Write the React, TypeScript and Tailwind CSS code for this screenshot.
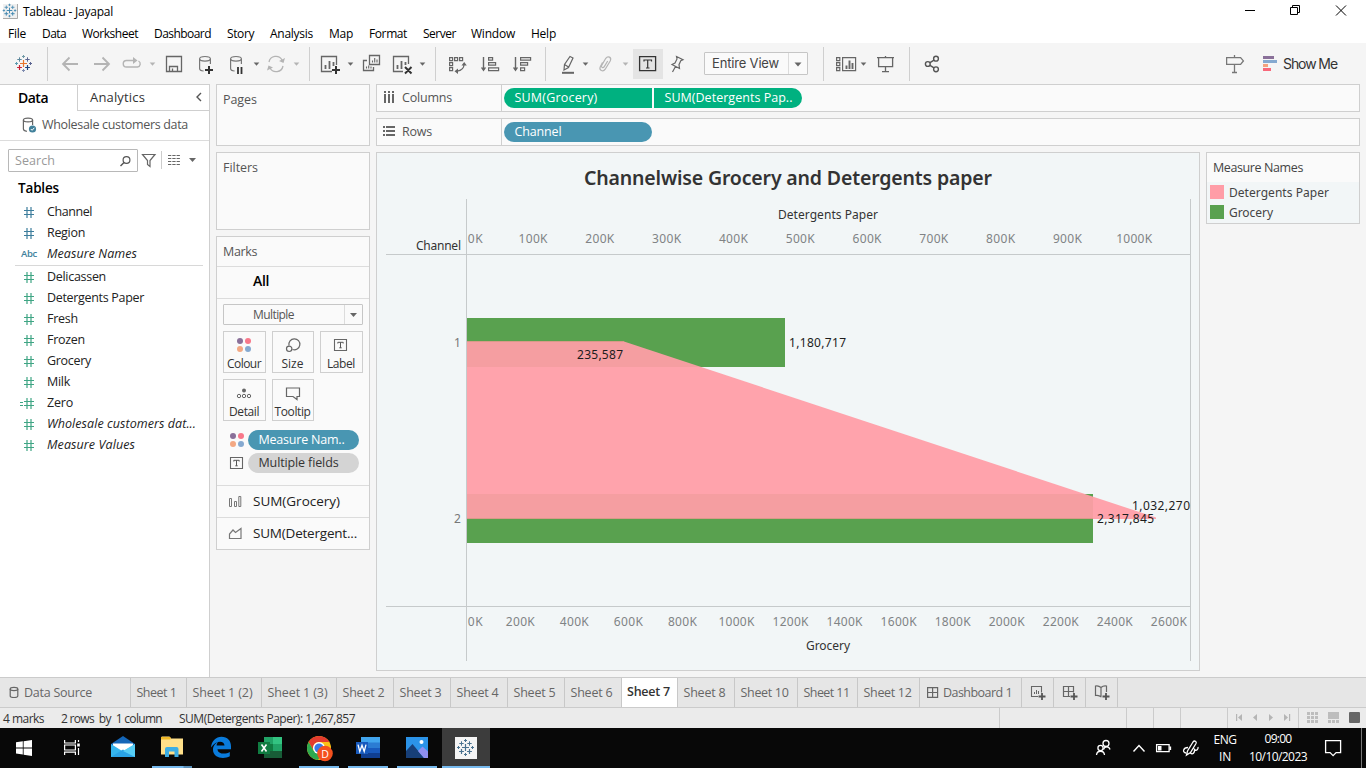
import React, { useLayoutEffect, useRef, useState } from "react";

/* Text whose letter spacing is fitted to a given advance width. */
function Fit({ w, children, className = "" }: { w: number; children: string; className?: string }) {
  const ref = useRef<HTMLSpanElement>(null);
  const [spacing, setSpacing] = useState(0);
  useLayoutEffect(() => {
    if (ref.current && spacing === 0) {
      const natural = ref.current.getBoundingClientRect().width;
      setSpacing((w - natural) / children.length);
    }
  }, []);
  return (
    <span ref={ref} className={`inline-block shrink-0 whitespace-pre ${className}`} style={{ letterSpacing: `${spacing}px` }}>
      {children}
    </span>
  );
}

/* Icon slot; the view box is "x y width height". */
function Ic({ v, className = "", children }: { v: string; className?: string; children?: React.ReactNode }) {
  const [, , w, h] = v.split(" ").map(Number);
  return (
    <svg viewBox={v} width={w} height={h} fill="none" className={`block shrink-0 ${className}`}>
      {children}
    </svg>
  );
}

const Sep = () => <div className="mt-1 h-[34px] w-px shrink-0 bg-[#cfcfcf]" />;

const Caret = ({ x, y = 64, c = "#666" }: { x: number; y?: number; c?: string }) => (
  <path d={`M${x - 2.8} ${y - 1.5}h5.6l-2.8 3.2z`} fill={c} />
);

const Cross = ({ x, y, r, c, w = 1.2 }: { x: number; y: number; r: number; c: string; w?: number }) => (
  <path d={`M${x - r} ${y}h${2 * r}M${x} ${y - r}v${2 * r}`} stroke={c} strokeWidth={w} />
);

function TableauMark({ x, y, mono, s = 1 }: { x: number; y: number; mono?: string; s?: number }) {
  const c = (k: string) => mono ?? k;
  return (
    <g transform={`translate(${x} ${y}) scale(${s})`}>
      <Cross x={0} y={0} r={3.5} c={c("#e8762c")} w={1.2} />
      <Cross x={-4} y={-4} r={2.2} c={c("#5b879b")} w={1} />
      <Cross x={4} y={-4} r={2.2} c={c("#5b6591")} w={1} />
      <Cross x={-4} y={4} r={2.4} c={c("#c72035")} w={1.2} />
      <Cross x={4} y={4} r={2.4} c={c("#1f457e")} w={1.2} />
      <Cross x={0} y={-7} r={1.5} c={c("#7199a6")} w={1} />
      <Cross x={0} y={7} r={1.5} c={c("#7f8cb0")} w={1} />
      <Cross x={-7} y={0} r={1.5} c={c("#5b9bb0")} w={1} />
      <Cross x={7} y={0} r={1.5} c={c("#5b6591")} w={1} />
    </g>
  );
}

const menus: [string, number, string][] = [
  ["File", 18, "w-[34px]"],
  ["Data", 24, "w-10"],
  ["Worksheet", 56, "w-[72px]"],
  ["Dashboard", 57, "w-[73px]"],
  ["Story", 27, "w-[43px]"],
  ["Analysis", 43, "w-[59px]"],
  ["Map", 24, "w-10"],
  ["Format", 38, "w-[54px]"],
  ["Server", 33, "w-12"],
  ["Window", 44, "w-[60px]"],
  ["Help", 25, "w-10"],
];

function Header() {
  return (
    <header className="h-[43px] bg-white font-['Open_Sans',sans-serif] text-xs text-black">
      <div className="flex h-6 items-center">
        <Ic v="0 0 23 24">
          <path d="M3 4h15v15H3z" fill="#f0f0f0" />
          <path d="M17.5 4v14.500H3" stroke="#aaa" />
          <TableauMark x={9.5} y={10.500} mono="#3f86b0" s={0.8} />
        </Ic>
        <Fit w={90}>Tableau - Jayapal</Fit>
        <Ic v="1240 0 110 24" className="ml-auto mr-4">
          <path d="M1245 10.5h10M1290.500 7.500h7v7h-7zM1292.500 7V5.500h7v7H1298M1336 5.500l10 10M1346 5.500l-10 10" stroke="#000" />
        </Ic>
      </div>
      <div className="flex h-5 items-center pl-2">
        {menus.map(([t, w, slot]) => (
          <div key={t} className={`${slot} shrink-0`}>
            <Fit w={w}>{t}</Fit>
          </div>
        ))}
      </div>
    </header>
  );
}

function Toolbar() {
  return (
    <div className="flex h-[41px] bg-[#f5f5f5] font-['Inter',sans-serif] text-[#333]">
      <Ic v="0 43 47 40">
        <TableauMark x={23.500} y={63.500} s={1} />
      </Ic>
      <Sep />
      <Ic v="48 43 261 40">
        <g stroke="#b4b4b4" strokeWidth="1.800">
          <path d="M78 64H63M69.500 57.500L63 64l6.500 6.500M94 64h15M102.500 57.500L109 64l-6.500 6.500" />
          <path d="M134 60.500h-7.500a3.200 3.200 0 0 0 0 6.500h11a3.200 3.200 0 0 0 1-6" strokeWidth="1.400" />
          <path d="M133 57l4.500 3.500-4.500 3.500z" fill="#b4b4b4" stroke="none" />
        </g>
        <Caret x={152.500} c="#b4b4b4" />
        <path d="M166.500 56.500h15v15h-15zM169.500 71.500v-5h8v5M172.500 68.500v3" stroke="#666" strokeWidth="1.300" />
        <g stroke="#777" strokeWidth="1.200">
          <ellipse cx="205" cy="58.800" rx="5.400" ry="2.300" />
          <path d="M199.600 59v9.500c0 1.500 1.500 2.300 4 2.500M210.400 59v5" />
          <ellipse cx="236" cy="58.800" rx="5.400" ry="2.300" />
          <path d="M230.600 59v9.500c0 1.500 1.500 2.300 4 2.500M241.400 59v5" />
        </g>
        <path d="M205 70h8M209 66v8" stroke="#333" strokeWidth="2" />
        <path d="M238 67v7M241.500 67v7" stroke="#333" strokeWidth="1.800" />
        <Caret x={256.500} />
        <g stroke="#b4b4b4" strokeWidth="1.300">
          <path d="M269 62a7 7 0 0 1 13-2M283 66a7 7 0 0 1-13 2" />
          <path d="M285 58l-1.500 5-4.500-2zM267 70.500l1.500-5 4.500 2z" fill="#b4b4b4" stroke="none" />
        </g>
        <Caret x={296.500} c="#b4b4b4" />
      </Ic>
      <Sep />
      <Ic v="310 43 125 40">
        <g stroke="#666" strokeWidth="1.300">
          <path d="M332 71.500h-10.500v-15h15V65" />
          <path d="M325.500 69v-4M329.500 69v-8M333.500 66v-4" strokeWidth="1.800" />
          <path d="M369.500 55.500h10v9h-10zM367 60.500h-3.500v10h10V67" />
          <path d="M372.500 62.500v-2M374.700 62.500v-4.500M377 62.500v-3M366.500 68.500v-2M368.700 68.500v-3M371 68.500v-2" strokeWidth="1.100" />
          <path d="M403 71.500h-9.500v-15h15V64" />
          <path d="M397.500 69v-4M401.500 69v-8M405.500 65v-3" strokeWidth="1.800" />
        </g>
        <path d="M332 70h8M336 66v8M405 67l6.500 6.500M411.500 67l-6.500 6.500" stroke="#333" strokeWidth="2" />
        <Caret x={350.500} />
        <Caret x={422.500} />
      </Ic>
      <Sep />
      <Ic v="436 43 109 40">
        <g stroke="#666" strokeWidth="1.200">
          <path d="M449.600 57.600h3v3h-3zM454.600 57.600h3v3h-3zM459.600 57.600h3v3h-3zM449.600 62.600h3v3h-3zM449.600 67.600h3v3h-3z" />
          <path d="M464 64.500c0 4-2.500 6-7 6.700" />
          <path d="M461.500 65.500l2.700-3.500 2.600 3.500zM458 68.500l-3.500 2.800 3.500 2.700z" fill="#666" stroke="none" />
          <path d="M483.500 57v12M515.500 57v12" strokeWidth="1.400" />
          <path d="M480.800 67.500h5.400l-2.700 4zM512.800 67.500h5.400l-2.700 4z" fill="#666" stroke="none" />
          <path d="M488.600 57.600h4v2.500h-4zM488.600 62.700h7v2.500h-7zM488.600 67.900h10v2.700h-10z" />
          <path d="M520.600 57.600h10v2.500h-10zM520.600 62.700h7v2.500h-7zM520.600 67.900h4v2.700h-4z" />
        </g>
      </Ic>
      <Sep />
      <Ic v="546 43 87 40">
        <path d="M570 56.500l3 1.500-4.500 9.500-4.500 2.500.5-5.500zM564.500 64.500l4 2.500" stroke="#666" strokeWidth="1.200" />
        <path d="M562 72.800h12" stroke="#666" strokeWidth="2" />
        <Caret x={585.500} />
        <path
          d="M602.500 62.500l-2.200 4.300c-1.600 3.600 2.800 5.600 4.900 2.400l5-8.200c1.800-3.700-2.300-5.700-4.400-2.700l-4 6.800c-1.200 2.500 1.300 3.500 2.500 1.500l3.400-5.600"
          stroke="#b4b4b4"
          strokeWidth="1.200"
        />
        <Caret x={625.500} c="#b4b4b4" />
      </Ic>
      <div className="mt-1.5 h-[30px] w-[30px] shrink-0 bg-[#e4e4e4]">
        <Ic v="633 49 30 30">
          <path d="M639.600 56.600h16v14h-16z" stroke="#333" strokeWidth="1.300" />
          <path d="M644 61.500v-1.500h7.500v1.500M647.700 60v8M646 68h3.500" stroke="#333" strokeWidth="1.200" />
        </Ic>
      </div>
      <Ic v="663 43 41 40">
        <path d="M676.500 56.500l6.500 3.200-2.200 1-1.800 4 .5 3.800-7.500-4 3-1.500 2-4zM675.500 66.500l-3 5.500" stroke="#666" strokeWidth="1.200" />
      </Ic>
      <div className="mt-[9px] flex h-[23px] w-[104px] shrink-0 items-center rounded-[1px] border border-[#c6c6c6] bg-[#fafafa] pl-[7px] text-[13px] text-[#444]">
        <Fit w={67}>Entire View</Fit>
        <div className="ml-auto h-full border-l border-[#dcdcdc]">
          <Ic v="789 53 18 21">
            <path d="M794.500 62.500h7l-3.500 4z" fill="#666" />
          </Ic>
        </div>
      </div>
      <div className="w-[15px] shrink-0" />
      <Sep />
      <Ic v="824 43 85 40">
        <g stroke="#666" strokeWidth="1.200">
          <path d="M836.600 57.600h3.200v3h-3.200zM836.600 62.600h3.200v3h-3.200zM836.600 67.600h3.200v3h-3.200zM842.600 57.600h13v13h-13z" />
          <path d="M846.500 69v-3.500M849.500 69v-8.500M852.500 69v-6" strokeWidth="1.900" />
          <path d="M877 57.600h17M878.600 58v8.600h14V58M885.500 67v4.500M882 71.600h7M885.500 56v1.500" strokeWidth="1.300" />
        </g>
        <Caret x={863.500} />
      </Ic>
      <Sep />
      <Ic v="910 43 316 40">
        <g stroke="#555" strokeWidth="1.400">
          <circle cx="927.800" cy="64" r="2.400" />
          <circle cx="936" cy="58.700" r="2.400" />
          <circle cx="936" cy="69.300" r="2.400" />
          <path d="M930 62.700l4-2.600M930 65.300l4 2.600" />
        </g>
      </Ic>
      <Ic v="1226 43 57 40">
        <path d="M1226.600 57.600h14l2.800 3.300-2.800 3.500h-14zM1234.500 55v2.500M1234.500 64.500v8M1232 72.500h5" stroke="#777" strokeWidth="1.300" />
        <path d="M1263 56h11v3h-11z" fill="#8a7099" />
        <path d="M1263 60h14v3h-14z" fill="#85a9d0" />
        <path d="M1263 64h5v3h-5z" fill="#f3a27e" />
        <path d="M1263 68h8v3h-8z" fill="#f8687a" />
      </Ic>
      <div className="flex items-center text-sm">
        <Fit w={54}>Show Me</Fit>
      </div>
    </div>
  );
}

function Hash({ c, calc }: { c: string; calc?: boolean }) {
  return (
    <Ic v="0 0 29 20">
      <path d="M7 4v11M11 4v11M4 7.500h10M4 11.500h10" stroke={c} strokeWidth="1.200" />
      {calc && <path d="M0 8.500h3M0 11.500h3" stroke={c} strokeWidth="1" />}
    </Ic>
  );
}

type Field = { t: string; w: number; italic?: boolean; kind?: "abc" | "calc" };

function FieldRow({ f, c }: { f: Field; c: string }) {
  return (
    <div className="flex h-[21px] items-center pl-5">
      {f.kind === "abc" ? (
        <div className="w-[29px] shrink-0 pl-px text-[9.5px] font-semibold text-[#41819b]">
          <Fit w={16}>Abc</Fit>
        </div>
      ) : (
        <Hash c={c} calc={f.kind === "calc"} />
      )}
      <Fit w={f.w} className={f.italic ? "-ml-[2px] italic" : "-ml-[2px]"}>
        {f.t}
      </Fit>
    </div>
  );
}

const dims: Field[] = [
  { t: "Channel", w: 45 },
  { t: "Region", w: 38 },
  { t: "Measure Names", w: 90, italic: true, kind: "abc" },
];
const measures: Field[] = [
  { t: "Delicassen", w: 59 },
  { t: "Detergents Paper", w: 97 },
  { t: "Fresh", w: 31 },
  { t: "Frozen", w: 38 },
  { t: "Grocery", w: 44 },
  { t: "Milk", w: 23 },
  { t: "Zero", w: 26, kind: "calc" },
  { t: "Wholesale customers dat...", w: 149, italic: true },
  { t: "Measure Values", w: 88, italic: true },
];

function DataPane() {
  return (
    <aside className="flex w-[210px] shrink-0 flex-col border-r border-t border-[#cfcfcf] bg-white text-[#222]">
      <div className="flex h-[26px]">
        <div className="flex w-[77px] shrink-0 items-center pl-[18px] text-sm font-semibold text-black">
          <Fit w={30}>Data</Fit>
        </div>
        <div className="flex grow items-center border-b border-l border-[#cfcfcf] pl-3 text-[13px] text-[#333]">
          <Fit w={55}>Analytics</Fit>
          <Ic v="145 85 64 25">
            <path d="M201 93l-4 4 4 4" stroke="#555" strokeWidth="1.400" />
          </Ic>
        </div>
      </div>
      <div className="flex h-[30px] items-center border-b border-[#dcdcdc] text-[#555]">
        <Ic v="0 111 42 29">
          <g stroke="#666" strokeWidth="1.200">
            <ellipse cx="28" cy="120" rx="4.600" ry="1.900" />
            <path d="M23.400 120v9c0 1.200 1 2 3.500 2.300M32.600 120v5" />
          </g>
          <circle cx="32.500" cy="129" r="3.600" fill="#41819b" />
          <path d="M30.800 129l1.300 1.300 2.200-2.500" stroke="#fff" strokeWidth="1" />
        </Ic>
        <Fit w={146}>Wholesale customers data</Fit>
      </div>
      <div className="mt-2 flex h-[23px] pl-2">
        <div className="flex w-[130px] shrink-0 items-center rounded-[1px] border border-[#b8b8b8] pl-1.5 pt-px text-[#999]">
          <Fit w={40}>Search</Fit>
          <Ic v="115 150 22 21" className="ml-auto">
            <circle cx="126.500" cy="159" r="3.400" stroke="#555" strokeWidth="1.200" />
            <path d="M124 161.500l-3.500 3.500" stroke="#555" strokeWidth="1.400" />
          </Ic>
        </div>
        <Ic v="138 149 71 23">
          <path d="M142.500 154.500h12.500l-5 6v6l-2.500-2v-4z" stroke="#666" strokeWidth="1.200" />
          <path d="M161.500 151v18" stroke="#ccc" />
          <path d="M168 155.500h12M168 158.500h12M168 161.500h12M168 164.500h12" stroke="#666" strokeWidth="1.200" strokeDasharray="3.300 1" />
          <path d="M189 158h7l-3.500 4z" fill="#666" />
        </Ic>
      </div>
      <div className="mt-[5px] flex h-[22px] items-center pl-[18px] text-[13.5px] font-semibold text-black">
        <Fit w={41}>Tables</Fit>
      </div>
      <div className="mt-[3px]">
        {dims.map((f) => (
          <FieldRow key={f.t} f={f} c="#3d7d9c" />
        ))}
      </div>
      <div className="ml-[15px] mr-1.5 h-px shrink-0 bg-[#d8d8d8]" />
      <div className="mt-px">
        {measures.map((f) => (
          <FieldRow key={f.t} f={f} c="#3fa584" />
        ))}
      </div>
    </aside>
  );
}

function MarkDots({ v }: { v: string }) {
  return (
    <Ic v={v}>
      <circle cx="4" cy="4" r="3" fill="#8a7099" />
      <circle cx="12" cy="4" r="3" fill="#f8788a" />
      <circle cx="4" cy="12" r="3" fill="#f3a883" />
      <circle cx="12" cy="12" r="3" fill="#85a9d0" />
    </Ic>
  );
}

function LabelIcon() {
  return (
    <Ic v="0 0 16 16">
      <path d="M1.500 2.500h12v11h-12z" stroke="#666" strokeWidth="1.100" />
      <path d="M4.800 6.500V5.300h5.400v1.200M7.500 5.300v5.500M6.300 10.800h2.400" stroke="#555" />
    </Ic>
  );
}

function MarkButton({ label, w, children }: { label: string; w: number; children: React.ReactNode }) {
  return (
    <div className="flex h-[42px] flex-col items-center border border-[#cfcfcf] pr-px pt-[5px] text-xs text-[#333]">
      {children}
      <div className="mt-[3px] leading-4">
        <Fit w={w}>{label}</Fit>
      </div>
    </div>
  );
}

const card = "border border-[#cfcfcf] bg-[#fafafa]";

function CardsColumn() {
  return (
    <div className="flex w-[154px] shrink-0 flex-col gap-1.5 text-[#555]">
      <section className={`${card} h-[62px] pl-1.5 pt-[5px] leading-5`}>
        <Fit w={34}>Pages</Fit>
      </section>
      <section className={`${card} h-[78px] pl-1.5 pt-[5px] leading-5`}>
        <Fit w={35}>Filters</Fit>
      </section>
      <section className={`${card} h-[314px]`}>
        <div className="h-[30px] border-b border-[#dcdcdc] pl-1.5 pt-[5px] leading-5">
          <Fit w={34}>Marks</Fit>
        </div>
        <div className="flex h-8 items-center border-b border-[#dcdcdc] pb-[3px] pl-9 text-sm font-semibold text-black">
          <Fit w={16}>All</Fit>
        </div>
        <div className="h-[187px] border-b border-[#dcdcdc] px-1.5 pt-[5px]">
          <div className="flex h-[21px] items-center rounded-[1px] border border-[#c6c6c6] pl-[29px] text-xs">
            <Fit w={41}>Multiple</Fit>
            <div className="ml-auto h-full border-l border-[#dcdcdc]">
              <Ic v="0 0 17 19">
                <path d="M5 8h7L8.500 12z" fill="#666" />
              </Ic>
            </div>
          </div>
          <div className="mt-1.5 grid grid-cols-[43px_42px_43px] gap-1.5">
            <MarkButton label="Colour" w={34}>
              <MarkDots v="0 0 16 16" />
            </MarkButton>
            <MarkButton label="Size" w={22}>
              <Ic v="0 0 16 16">
                <path d="M4 8.500a5.500 5.500 0 1 1 3.500 4" stroke="#666" strokeWidth="1.200" />
                <circle cx="4.200" cy="11.800" r="2.700" stroke="#666" strokeWidth="1.200" />
              </Ic>
            </MarkButton>
            <MarkButton label="Label" w={28}>
              <LabelIcon />
            </MarkButton>
            <MarkButton label="Detail" w={30}>
              <Ic v="0 0 16 16">
                <circle cx="8" cy="5.500" r="2" fill="#666" />
                <circle cx="3" cy="11" r="1.700" stroke="#666" />
                <circle cx="8" cy="11" r="1.700" stroke="#666" />
                <circle cx="13" cy="11" r="1.700" stroke="#666" />
              </Ic>
            </MarkButton>
            <MarkButton label="Tooltip" w={36}>
              <Ic v="0 0 16 16">
                <path d="M1.500 3h13v8.500H12v3l-4-3H1.500z" stroke="#666" strokeWidth="1.200" />
              </Ic>
            </MarkButton>
          </div>
          <div className="mt-[9px] flex h-5 items-center pl-1.5">
            <MarkDots v="0 0 19 16" />
            <div className="flex h-5 w-[111px] items-center rounded-full bg-[#4996b2] pl-[10.500px] font-medium text-white">
              <Fit w={86}>Measure Nam..</Fit>
            </div>
          </div>
          <div className="mt-[3px] flex h-5 items-center pl-1.5">
            <LabelIcon />
            <div className="ml-[3px] flex h-5 w-[111px] items-center rounded-full bg-[#d4d4d4] pl-[10.500px] font-medium text-[#333]">
              <Fit w={80}>Multiple fields</Fit>
            </div>
          </div>
        </div>
        <div className="flex h-8 items-center border-b border-[#dcdcdc] pb-px text-[13.5px] text-[#222]">
          <Ic v="217 485 36 31">
            <path d="M229.500 497.500h2v8h-2zM234.500 500.500h2v5h-2zM238.800 495.500h2v10h-2z" stroke="#777" />
          </Ic>
          <Fit w={87}>SUM(Grocery)</Fit>
        </div>
        <div className="flex h-[31px] items-center pb-px text-[13.5px] text-[#222]">
          <Ic v="217 517 36 31">
            <path d="M229.500 537.500v-4.500l3.500-4 2.500 2.500 5.500-4v10z" stroke="#777" strokeWidth="1.200" />
          </Ic>
          <Fit w={104}>SUM(Detergent...</Fit>
        </div>
      </section>
    </div>
  );
}

function Shelf({ label, w, icon, children }: { label: string; w: number; icon: React.ReactNode; children: React.ReactNode }) {
  return (
    <div className={`${card} flex h-7 text-[#555]`}>
      <div className="flex w-[125px] shrink-0 items-center border-r border-[#cfcfcf]">
        {icon}
        <Fit w={w}>{label}</Fit>
      </div>
      <div className="flex items-center gap-0.5 pl-0.5 font-medium text-white">{children}</div>
    </div>
  );
}

const DetTicks = ["0K", "100K", "200K", "300K", "400K", "500K", "600K", "700K", "800K", "900K", "1000K"];
const GroTicks = ["0K", "200K", "400K", "600K", "800K", "1000K", "1200K", "1400K", "1600K", "1800K", "2000K", "2200K", "2400K", "2600K"];
const tickWidth = (t: string) => (t.length === 2 ? 15 : t.length === 4 ? 29 : 36);

function Ticks({ ticks, step, y }: { ticks: string[]; step: number; y: number }) {
  return (
    <g fill="#808385">
      {ticks.map((t, i) => (
        <text key={t} x={(i === 0 ? 475.2 : 466.2 + i * step) - tickWidth(t) / 2} y={y} textLength={tickWidth(t)}>
          {t}
        </text>
      ))}
    </g>
  );
}

function Chart() {
  return (
    <Ic v="377 153 822 517" className="font-['Noto_Sans',sans-serif] text-xs">
      <path d="M467 318h318v49H467zM467 494h626v49H467z" fill="#59a14f" />
      <path d="M467 341.500h157l532 176v1.500H467z" fill="#ff9da7" fillOpacity="0.940" />
      <path d="M467 341.500h157M467 518.500h626" stroke="#d89a88" strokeWidth="1" />
      <path d="M466.500 199v462M1190.500 199v462M386 254.500h805M386 606.500h805" stroke="#c6cacb" />
      <text x="584" y="185" textLength="408" fill="#333" className="text-[19.5px] font-semibold">
        Channelwise Grocery and Detergents paper
      </text>
      <g fill="#333">
        <text x="778" y="219" textLength="100">Detergents Paper</text>
        <text x="806" y="650" textLength="44">Grocery</text>
        <text x="416" y="250" textLength="45">Channel</text>
      </g>
      <Ticks ticks={DetTicks} step={66.800} y={243} />
      <Ticks ticks={GroTicks} step={54.050} y={626} />
      <g fill="#777">
        <text x="454" y="347">1</text>
        <text x="454" y="523">2</text>
      </g>
      <g fill="#1d1d1d">
        <text x="789" y="347" textLength="57">1,180,717</text>
        <text x="577" y="359" textLength="46">235,587</text>
        <text x="1132" y="510" textLength="58">1,032,270</text>
        <text x="1097" y="523" textLength="57">2,317,845</text>
      </g>
    </Ic>
  );
}

function Workspace() {
  return (
    <div className="flex min-w-0 grow flex-col gap-1.5">
      <Shelf
        label="Columns"
        w={50}
        icon={
          <Ic v="377 85 25 26">
            <path d="M385 91v2M389 91v2M393 91v2M385 94v9M389 94v9M393 94v9" stroke="#666" strokeWidth="2" />
          </Ic>
        }
      >
        <div className="flex h-5 w-[148px] items-center rounded-l-full bg-[#00b180] pl-[10.500px]">
          <Fit w={83}>SUM(Grocery)</Fit>
        </div>
        <div className="flex h-5 w-[148px] items-center rounded-r-full bg-[#00b180] pl-[10.500px]">
          <Fit w={128}>SUM(Detergents Pap..</Fit>
        </div>
      </Shelf>
      <Shelf
        label="Rows"
        w={30}
        icon={
          <Ic v="377 119 25 26">
            <path d="M383 127h2M383 131h2M383 135h2M386 127h9M386 131h9M386 135h9" stroke="#666" strokeWidth="2" />
          </Ic>
        }
      >
        <div className="flex h-5 w-[148px] items-center rounded-full bg-[#4996b2] pl-[10.500px]">
          <Fit w={47}>Channel</Fit>
        </div>
      </Shelf>
      <div className="flex gap-1.5">
        <div className="h-[519px] w-[824px] shrink-0 border border-[#cfcfcf] bg-[#f2f6f7]">
          <Chart />
        </div>
        <div className="h-[72px] grow border border-[#cfcfcf] bg-[#f2f6f7] text-[#444]">
          <div className="h-[29px] bg-[#fafafa] pl-1.5 pt-[5px] leading-5">
            <Fit w={90}>Measure Names</Fit>
          </div>
          <div className="flex h-5 items-center gap-[5px] pl-[3px] pt-0.5 font-['Noto_Sans',sans-serif] text-xs">
            <div className="mb-0.5 size-3.5 bg-[#ff9da7]" />
            <Fit w={100}>Detergents Paper</Fit>
          </div>
          <div className="flex h-5 items-center gap-[5px] pl-[3px] pt-0.5 font-['Noto_Sans',sans-serif] text-xs">
            <div className="mb-0.5 size-3.5 bg-[#59a14f]" />
            <Fit w={44}>Grocery</Fit>
          </div>
        </div>
      </div>
    </div>
  );
}

const sheets: [string, number, string][] = [
  ["Sheet 1", 40, "w-14"],
  ["Sheet 1 (2)", 60, "w-[75px]"],
  ["Sheet 1 (3)", 60, "w-[75px]"],
  ["Sheet 2", 42, "w-[57px]"],
  ["Sheet 3", 42, "w-[57px]"],
  ["Sheet 4", 42, "w-[57px]"],
  ["Sheet 5", 42, "w-[57px]"],
  ["Sheet 6", 42, "w-[57px]"],
  ["Sheet 7", 43, "w-14"],
  ["Sheet 8", 42, "w-[57px]"],
  ["Sheet 10", 48, "w-[63px]"],
  ["Sheet 11", 46, "w-[60px]"],
  ["Sheet 12", 48, "w-[62px]"],
];

function SheetTabs() {
  const tab = "flex h-full shrink-0 items-center border-r border-[#c8c8c8]";
  return (
    <div className="flex h-[31px] border-y border-[#cbcbcb] bg-[#e6e6e6] text-[#666]">
      <div className={`${tab} w-[131px] pt-0.5`}>
        <Ic v="0 679 24 27">
          <ellipse cx="14" cy="688" rx="3.800" ry="1.600" stroke="#666" strokeWidth="1.200" />
          <path d="M10.200 688v7c0 2 7.600 2 7.600 0v-7" stroke="#666" strokeWidth="1.200" />
        </Ic>
        <Fit w={68}>Data Source</Fit>
      </div>
      {sheets.map(([t, w, slot]) => (
        <div
          key={t}
          className={`${tab} ${slot} ${t === "Sheet 7" ? "bg-white pl-[5px] font-semibold text-[#333]" : "pl-[5.500px] pt-0.5"}`}
        >
          <Fit w={w}>{t}</Fit>
        </div>
      ))}
      <div className={`${tab} w-[102px] pt-0.5`}>
        <Ic v="920 679 23 27">
          <path d="M927.600 686.600h10v9.800h-10zM932.600 686.500v10M927.500 691.500h10" stroke="#666" strokeWidth="1.200" />
        </Ic>
        <Fit w={69}>Dashboard 1</Fit>
      </div>
      <div className={`${tab} w-8`}>
        <Ic v="1022 678 31 29">
          <path d="M1038 696.500h-6.500v-10h10v6" stroke="#666" strokeWidth="1.100" />
          <path d="M1034.500 694v-2M1036.500 694v-4M1038.500 694v-3" stroke="#666" />
          <path d="M1038.500 696.500h7M1042 693v7" stroke="#555" strokeWidth="1.800" />
        </Ic>
      </div>
      <div className={`${tab} w-8`}>
        <Ic v="1054 678 31 29">
          <path d="M1070 696.500h-6.500v-10h10v6M1068.500 686.500v10M1063.500 691.500h10" stroke="#666" strokeWidth="1.200" />
          <path d="M1070.500 696.500h7M1074 693v7" stroke="#555" strokeWidth="1.800" />
        </Ic>
      </div>
      <div className={`${tab} w-8`}>
        <Ic v="1086 678 31 29">
          <path d="M1101.500 697c-2-1.500-4-2-6-1.500v-9.500c2-.5 4 .2 5.500 1.500 1.500-1.300 3-2 5.500-1.500v6M1101 687.500v8.500" stroke="#666" strokeWidth="1.200" />
          <path d="M1102.500 696.500h7M1106 693v7" stroke="#555" strokeWidth="1.800" />
        </Ic>
      </div>
    </div>
  );
}

function StatusBar() {
  return (
    <div className="flex h-5 items-center bg-[#ebebeb] pl-[3px] text-xs text-[#333]">
      <div className="w-[58px] shrink-0 pt-px"><Fit w={41}>4 marks</Fit></div>
      <div className="w-[118px] shrink-0 pt-px"><Fit w={101}>2 rows  by  1 column</Fit></div>
      <Fit w={176} className="pt-px">SUM(Detergents Paper): 1,267,857</Fit>
      <div className="ml-auto flex h-full">
        <div className="w-[127px] border-l border-[#cbcbcb]" />
        <div className="w-[27px] border-l border-[#cbcbcb]" />
        <div className="w-[27px] border-l border-[#cbcbcb]" />
        <div className="w-[47px] border-l border-[#cbcbcb]" />
        <div className="border-l border-[#cbcbcb]">
          <Ic v="1228 708 70 20">
            <path d="M1236 714h1.200v7H1236zM1242 714v7l-4-3.500zM1257 714v7l-4-3.500zM1269 714v7l4-3.500zM1284 714v7l4-3.500zM1289 714h1.200v7H1289z" fill="#b5b5b5" />
          </Ic>
        </div>
        <div className="border-l border-[#cbcbcb]">
          <Ic v="1299 708 67 20">
            <path d="M1307 712h3v3h-3zM1311 712h3v3h-3zM1315 712h3v3h-3zM1307 716h3v3h-3zM1311 716h3v3h-3zM1315 716h3v3h-3zM1307 720h3v3h-3zM1311 720h3v3h-3zM1315 720h3v3h-3zM1328 712h11v7h-11zM1328 720h3v3h-3zM1332 720h3v3h-3zM1336 720h3v3h-3z" fill="#bdbdbd" />
            <rect x="1349" y="712" width="11" height="11" rx="1" fill="#666" />
          </Ic>
        </div>
      </div>
    </div>
  );
}

function Taskbar() {
  return (
    <div className="flex h-10 bg-[#080808] font-['Open_Sans',sans-serif] text-xs text-white">
      <Ic v="0 728 96 40">
        <path d="M16 742.300l6.800-1v6.200H16zM23.600 741.200l8.400-1.200v7.500h-8.400zM16 748.400h6.800v6.200l-6.800-1zM23.600 748.400h8.400v7.600l-8.400-1.200z" fill="#fff" />
        <path d="M64.600 740v3h10.800v-3M64.600 755v-2.800h10.800v2.800M64.600 745h10.800v5H64.600zM78.500 740v2M78.500 748v7" stroke="#fff" strokeWidth="1.200" />
        <path d="M77.200 743.500h2.600v3h-2.600z" fill="#fff" />
      </Ic>
      <Ic v="96 728 56 40">
        <path d="M111 744l12-8 12 8v3h-24z" fill="#1466b8" />
        <path d="M113 743.500h20v8h-20z" fill="#fff" />
        <path d="M111 744l12 7.500L135 744v13h-24z" fill="#35b5ee" />
        <path d="M111 757l12-7.500 12 7.500z" fill="#2aa3e6" />
        <path d="M135 744v13l-12-6z" fill="#56cdf5" />
      </Ic>
      <Ic v="152 728 48 40">
        <path d="M161 738c0-1 .5-1.500 1.500-1.500h7l1.500 2h12v16h-22z" fill="#ffe08a" />
        <path d="M161 737h9.500v2.500H161z" fill="#f0b928" />
        <path d="M165 757v-8q0-2 2-2h9.500q2 0 2 2v8h-4v-5.500h-5.500v5.500z" fill="#3caee5" />
        <path d="M152 766h40v2h-40z" fill="#76b9ed" />
        <path d="M183.500 766h8.500v2h-8.500z" fill="#5a8fb8" />
      </Ic>
      <Ic v="200 728 48 40">
        <path d="M211 747.500c.5-6.500 5-10.800 10.500-10.800 6 0 9.500 4 9.500 9.500v3h-13.500c.2 5 8 5.500 12.300 2.800v4.300c-6.500 3.500-16.800 1.500-16.800-6.500 0-4 2.300-6.500 5-7.800-1 1.300-1.300 2.300-1.400 3.500h7.900c0-5-8.500-5.500-13.500 2z" fill="#0a7bdb" />
      </Ic>
      <Ic v="248 728 51 40">
        <path d="M264 737h18v21h-18z" fill="#21a366" />
        <path d="M273 737h9v7h-9z" fill="#33c481" />
        <path d="M264 744h9v7h-9z" fill="#107c41" />
        <path d="M264 751h18v7h-18z" fill="#185c37" />
        <path d="M258 742h12v12h-12z" fill="#107c41" />
        <path d="M261.500 744.500l5 7M266.500 744.500l-5 7" stroke="#fff" strokeWidth="1.600" />
      </Ic>
      <Ic v="299 728 48 40">
        <circle cx="319" cy="748" r="12" fill="#fbc116" />
        <path d="M308.600 742a12 12 0 0 1 20.800 0H319a6 6 0 0 0-5.200 9z" fill="#e33b2e" />
        <path d="M308.600 742a12 12 0 0 0 9.400 18l5.500-9H319l-5.200 0z" fill="#2da94f" />
        <circle cx="319" cy="748" r="6" fill="#fff" />
        <circle cx="319" cy="748" r="4.600" fill="#3a78e8" />
        <circle cx="325" cy="753.500" r="7.800" fill="#f4511e" />
        <text x="325" y="757.500" textAnchor="middle" fill="#fff" className="text-[10.5px]">D</text>
        <path d="M299 766h40v2h-40z" fill="#76b9ed" />
      </Ic>
      <Ic v="347 728 49 40">
        <path d="M361 737h19v7h-19z" fill="#41a5ee" />
        <path d="M361 742.500h19v5.500h-19z" fill="#2b7cd3" />
        <path d="M361 748h19v5h-19z" fill="#185abd" />
        <path d="M361 753h19v5h-19z" fill="#103f91" />
        <path d="M356 742h12v12h-12z" fill="#185abd" />
        <path d="M358 744.700l1.800 6.800 2.200-6.300 2.200 6.300 1.800-6.800" stroke="#fff" strokeWidth="1.300" />
        <path d="M348 766h40v2h-40z" fill="#76b9ed" />
      </Ic>
      <Ic v="396 728 46 40">
        <path d="M406 737h22v21h-22z" fill="#2b93e8" />
        <path d="M406 751l6.500-7 11.500 14h-18z" fill="#173f78" />
        <path d="M418 751l4.500-4.500 5.500 5v6.500h-4z" fill="#8f8ff0" />
        <circle cx="421.500" cy="742" r="2" fill="#fff" />
        <path d="M397 766h40v2h-40z" fill="#76b9ed" />
      </Ic>
      <Ic v="442 728 48 40" className="bg-[#3c3c3c]">
        <path d="M455 737h22v22h-22z" fill="#f4f4f4" />
        <TableauMark x={465.500} y={747.500} mono="#48718f" />
        <path d="M442 766h48v2h-48z" fill="#76b9ed" />
      </Ic>
      <Ic v="1090 728 120 40" className="ml-auto">
        <g stroke="#fff" strokeWidth="1.300">
          <circle cx="1106" cy="743.500" r="3" />
          <path d="M1103.500 749.500c1-3.500 5.500-3.500 6.500 0" />
          <circle cx="1100.500" cy="748" r="2.600" />
          <path d="M1096.500 755c.5-5 7.500-5 8 0" />
          <path d="M1133.500 751.500l5.500-6 5.500 6" strokeWidth="1.400" />
          <path d="M1156.600 744.600h12.500v7h-12.500zM1170.500 746.500v3.500" />
          <path d="M1158 746h3.500v4.500h-3.500z" fill="#fff" stroke="none" />
          <path d="M1188 747.500c-5 0-6 5-2 5.500M1186.500 755l1-4 5.500-9c1.500-2 4-.5 3 1.500l-5.500 9zM1190.500 753c2 2.500 4.500-.5 4-3.500 2 2 4-.5 3.500-2.500" />
        </g>
      </Ic>
      <div className="flex w-[30px] shrink-0 flex-col items-center pt-[3px] leading-[17px]">
        <Fit w={23}>ENG</Fit>
        <Fit w={12}>IN</Fit>
      </div>
      <div className="flex w-[76px] shrink-0 flex-col items-center pt-[2px] leading-[18px]">
        <Fit w={27}>09:00</Fit>
        <Fit w={58}>10/10/2023</Fit>
      </div>
      <Ic v="1316 728 50 40">
        <path d="M1325.600 740.600h15v12h-4.500l-3 3-3-3h-4.500z" stroke="#fff" strokeWidth="1.300" />
        <path d="M1361.500 728v40" stroke="#777" />
      </Ic>
    </div>
  );
}

export default function App() {
  return (
    <div className="flex h-[768px] w-[1366px] flex-col overflow-hidden bg-[#f5f5f5] font-['Open_Sans',sans-serif] text-[12.5px]">
      <Header />
      <Toolbar />
      <main className="flex h-[593px] shrink-0 gap-1.5 pr-1.5">
        <DataPane />
        <CardsColumn />
        <Workspace />
      </main>
      <SheetTabs />
      <StatusBar />
      <Taskbar />
    </div>
  );
}
